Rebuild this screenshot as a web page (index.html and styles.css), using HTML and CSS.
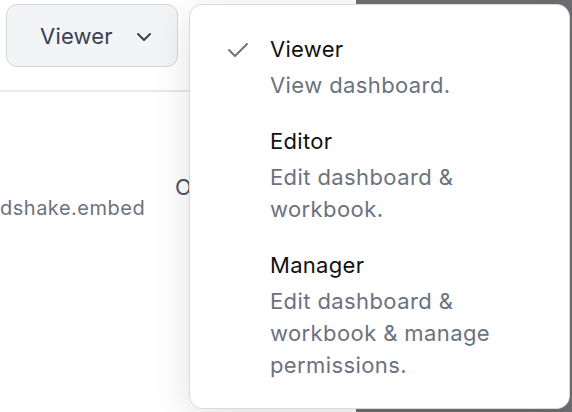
FILE: index.html
```html
<!DOCTYPE html>
<html lang="en">
<head>
  <meta charset="UTF-8">
  <title>Share settings</title>
  <link rel="stylesheet" href="styles.css">
</head>
<body>

  <div class="page">
    <div class="main">
      <div class="toolbar">
        <button class="role-button">
          Viewer
          <svg class="chevron" width="18" height="18" viewBox="0 0 18 18"><path d="M3 6 L9 12 L15 6" fill="none" stroke="#374151" stroke-width="2" stroke-linecap="round" stroke-linejoin="round"/></svg>
        </button>
      </div>
      <div class="row">
        <span class="embed-name">dshake.embed</span>
        <span class="embed-action">Open</span>
      </div>
    </div>
    <div class="side"></div>

    <div class="menu">
      <div class="option">
        <svg class="check" width="22" height="16" viewBox="0 0 22 16"><path d="M2 8 L8 14 L20 2" fill="none" stroke="#6b7280" stroke-width="2" stroke-linecap="round" stroke-linejoin="round"/></svg>
        <div class="option-title">Viewer</div>
        <div class="option-desc">View dashboard.</div>
      </div>
      <div class="option">
        <div class="option-title">Editor</div>
        <div class="option-desc">Edit dashboard &amp;<br>workbook.</div>
      </div>
      <div class="option">
        <div class="option-title">Manager</div>
        <div class="option-desc">Edit dashboard &amp;<br>workbook &amp; manage<br>permissions.</div>
      </div>
    </div>
  </div>

</body>
</html>
```

FILE: styles.css
```css
body {
  margin: 0;
  font-family: Inter, "Noto Sans", sans-serif;
  background: #fff;
}

.page {
  position: relative;
  display: flex;
  height: 412px;
  overflow: hidden;
}

.main {
  width: 356px;
  background: #fff;
}

.side {
  flex: 1;
  background: #6f6f71;
}

.toolbar {
  height: 92px;
  padding: 4px 0 0 6px;
  box-sizing: border-box;
  border-bottom: 2px solid #e7e7ec;
}

.role-button {
  display: flex;
  align-items: center;
  gap: 22px;
  width: 172px;
  height: 63px;
  padding: 0 0 0 33px;
  background: #f3f4f6;
  border: 1px solid #d4d6dc;
  border-radius: 11px;
  font-family: inherit;
  font-size: 22px;
  letter-spacing: 0.2px;
  color: #374151;
}

.chevron {
  margin-top: 2px;
}

.row {
  position: relative;
  margin-top: 96px;
  height: 40px;
}

.embed-name {
  position: absolute;
  left: 0;
  top: 8px;
  font-size: 20px;
  letter-spacing: 0.5px;
  color: #6b7280;
}

.embed-action {
  position: absolute;
  left: 175px;
  top: -14px;
  font-size: 22px;
  color: #4b5563;
}

.menu {
  position: absolute;
  left: 189px;
  top: 4px;
  width: 381px;
  height: 405px;
  box-sizing: border-box;
  padding: 29px 20px 0 80px;
  background: #fff;
  border: 1px solid #d8dae0;
  border-radius: 13px;
  box-shadow: 0 8px 40px rgba(0, 0, 0, 0.12);
}

.option {
  position: relative;
  margin-bottom: 25px;
}

.check {
  position: absolute;
  left: -43px;
  top: 8px;
}

.option-title {
  font-size: 22px;
  letter-spacing: 0.3px;
  color: #111;
  line-height: 30px;
}

.option-desc {
  font-size: 22px;
  letter-spacing: 0.4px;
  color: #6b7280;
  line-height: 32px;
  margin-top: 5px;
}
```
